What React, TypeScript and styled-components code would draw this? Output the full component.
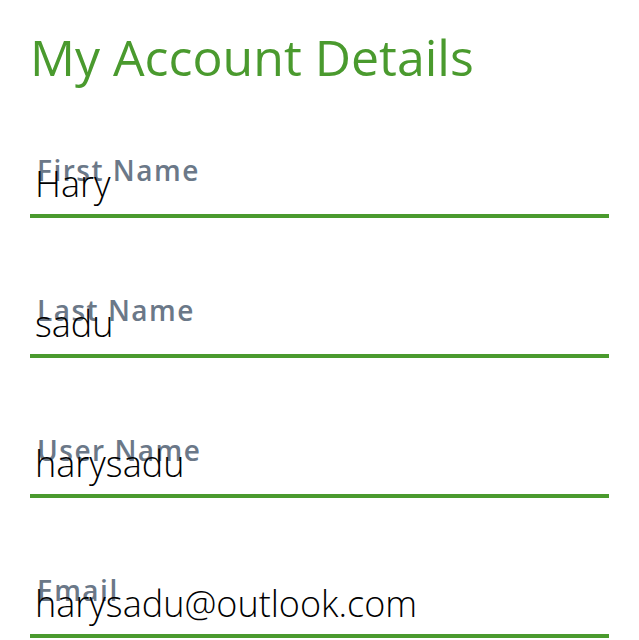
import React from "react";
import styled, { createGlobalStyle } from "styled-components";

const Global = createGlobalStyle`
  html, body { margin: 0; padding: 0; background: #ffffff; }
  body { font-family: "Open Sans", "Noto Sans", sans-serif; }
`;

const Page = styled.div`
  width: 639px;
  height: 640px;
  overflow: hidden;
  box-sizing: border-box;
  padding: 24px 30px 0 30px;
  background: #ffffff;
`;

const Title = styled.h1`
  margin: 0;
  font-family: "Open Sans", sans-serif;
  font-weight: 400;
  font-size: 50px;
  line-height: 66px;
  color: #4a9a2e;
`;

const Form = styled.div`
  display: flex;
  flex-direction: column;
  gap: 86px;
  margin-top: 74px;
`;

const Field = styled.div`
  display: grid;
  border-bottom: 4px solid #4a9a2e;
  padding-bottom: 10px;
`;

const Label = styled.label`
  grid-area: 1 / 1;
  align-self: start;
  margin: -10px 0 0 7px;
  font-family: "Open Sans", sans-serif;
  font-weight: 600;
  font-size: 28px;
  line-height: 32px;
  letter-spacing: 1.5px;
  color: #6b7888;
`;

const Value = styled.div`
  grid-area: 1 / 1;
  margin-left: 5px;
  font-family: "Open Sans", sans-serif;
  font-weight: 300;
  font-size: 36px;
  line-height: 40px;
  color: #000000;
`;

const fields = [
  { label: "First Name", value: "Hary" },
  { label: "Last Name", value: "sadu" },
  { label: "User Name", value: "harysadu" },
  { label: "Email", value: "harysadu@outlook.com" },
];

export default function App() {
  return (
    <>
      <Global />
      <Page>
        <Title>My Account Details</Title>
        <Form>
          {fields.map((f) => (
            <Field key={f.label}>
              <Label>{f.label}</Label>
              <Value>{f.value}</Value>
            </Field>
          ))}
        </Form>
      </Page>
    </>
  );
}
